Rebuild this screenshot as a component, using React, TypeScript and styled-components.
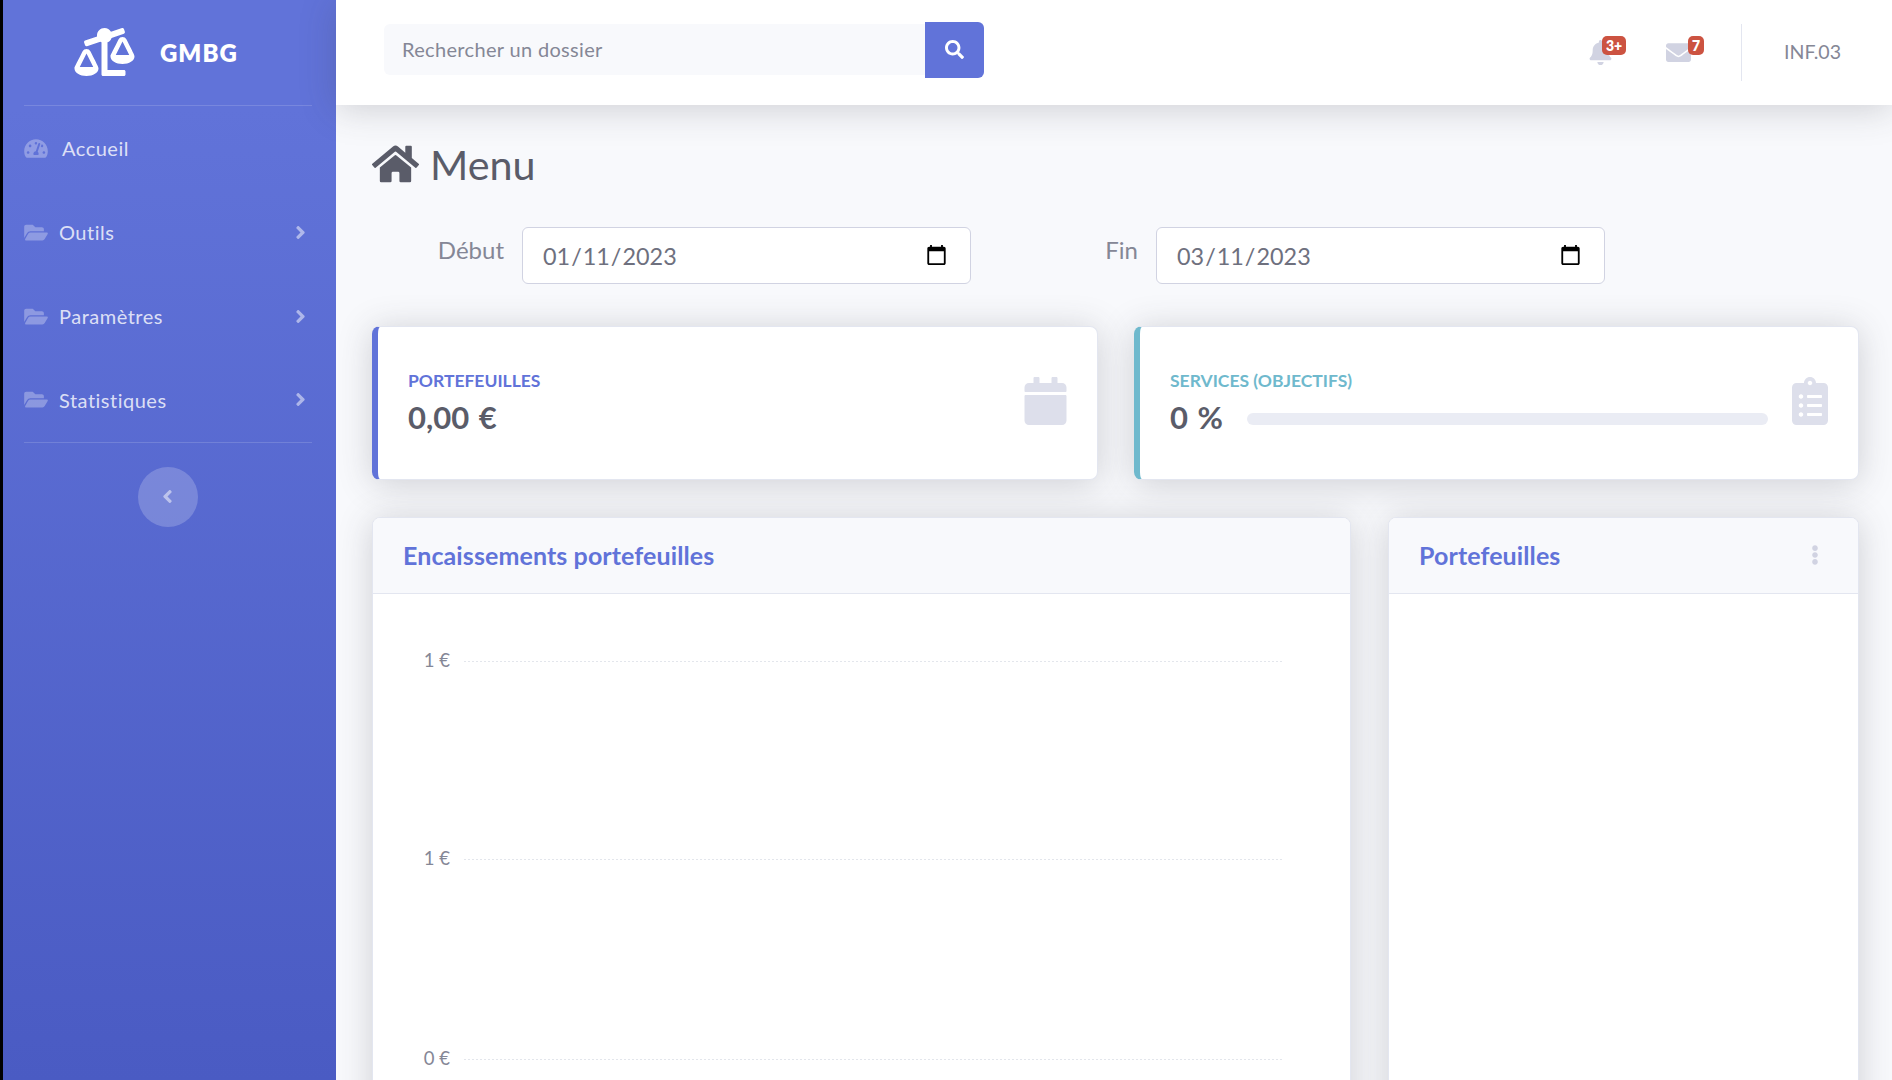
import styled, { createGlobalStyle } from "styled-components";
import {
  FaAngleLeft,
  FaAngleRight,
  FaBalanceScaleLeft,
  FaBell,
  FaCalendar,
  FaClipboardList,
  FaEllipsisV,
  FaEnvelope,
  FaFolderOpen,
  FaHome,
  FaSearch,
  FaTachometerAlt,
} from "react-icons/fa";

const cardShadow = "0 3.6px 34px rgba(58, 59, 69, 0.22)";

const GlobalStyle = createGlobalStyle`
  * { box-sizing: border-box; }
  html, body { margin: 0; padding: 0; height: 100%; overflow: hidden; }
  body {
    background: #f8f9fc;
    color: #858796;
    font-family: Lato, "Noto Sans", sans-serif;
  }
`;

const Wrapper = styled.div`
  display: flex;
  height: 100vh;
  overflow: hidden;
`;

const Sidebar = styled.aside`
  flex: 0 0 336px;
  border-left: 3px solid #000;
  padding: 0 24px 0 21px;
  background: linear-gradient(180deg, #6173d9 10%, #4a5bc3 100%);
  display: flex;
  flex-direction: column;
`;
const Brand = styled.div`
  height: 106px;
  display: flex;
  align-items: center;
  padding: 0 0 1px 50px;
  color: #fff;
  border-bottom: 1px solid rgba(255, 255, 255, 0.15);
  svg {
    width: 61px;
    height: 48px;
    margin-top: -1px;
  }
`;
const BrandText = styled.span`
  margin-left: 25px;
  font-size: 24px;
  font-weight: 800;
  letter-spacing: 1px;
`;
const NavList = styled.nav`
  padding: 1px 0 0;
  border-bottom: 1px solid rgba(255, 255, 255, 0.15);
`;
const NavItem = styled.div`
  height: 84px;
  display: flex;
  align-items: center;
  padding-bottom: 2px;
  color: rgba(255, 255, 255, 0.8);
  font-size: 20px;
  letter-spacing: 0.5px;
  &:last-child {
    height: 83px;
  }
`;
const NavIcon = styled.span<{ $gap: number }>`
  display: flex;
  margin-right: ${props => props.$gap}px;
  color: rgba(255, 255, 255, 0.3);
  svg {
    width: 24px;
    height: 21px;
  }
`;
const NavArrow = styled.span`
  display: flex;
  margin: 0 5px 0 auto;
  color: rgba(255, 255, 255, 0.5);
  svg {
    width: 13px;
    height: 21px;
  }
`;
const CollapseButton = styled.button`
  align-self: center;
  width: 60px;
  height: 60px;
  margin-top: 24px;
  padding: 0 2px 2px 0;
  border: 0;
  border-radius: 50%;
  background: rgba(255, 255, 255, 0.2);
  color: rgba(255, 255, 255, 0.5);
  display: flex;
  align-items: center;
  justify-content: center;
  svg {
    width: 13px;
    height: 21px;
  }
`;

const Page = styled.div`
  flex: 1;
  min-width: 0;
  display: flex;
  flex-direction: column;
`;
const Topbar = styled.header`
  position: relative;
  z-index: 2;
  flex: 0 0 105px;
  display: flex;
  align-items: center;
  padding: 0 51px 0 48px;
  background: #fff;
  box-shadow: ${cardShadow};
`;
const SearchBox = styled.div`
  display: flex;
  align-items: center;
  padding-bottom: 6px;
`;
const SearchInput = styled.input`
  width: 541px;
  height: 51px;
  padding: 0 18px 2px;
  border: 0;
  border-radius: 6px 0 0 6px;
  background: #f8f9fc;
  font: 400 20px Lato, "Noto Sans", sans-serif;
  letter-spacing: 0.33px;
  color: #6e707e;
  outline: none;
  &::placeholder {
    color: #858796;
    opacity: 1;
  }
`;
const SearchButton = styled.button`
  width: 59px;
  height: 56px;
  padding: 0;
  border: 0;
  border-radius: 0 6px 6px 0;
  background: #6173d9;
  color: #fff;
  display: flex;
  align-items: center;
  justify-content: center;
  svg {
    width: 19px;
    height: 19px;
  }
`;
const TopRight = styled.div`
  margin-left: auto;
  display: flex;
  align-items: center;
`;
const AlertIcon = styled.div<{ $gap: number }>`
  position: relative;
  display: flex;
  margin-right: ${props => props.$gap}px;
  color: #d1d3e2;
`;
const Badge = styled.span<{ $left: number }>`
  position: absolute;
  top: -4px;
  left: ${props => props.$left}px;
  padding: 0 4px;
  height: 19px;
  line-height: 19px;
  border-radius: 5px;
  background: #cc5341;
  color: #fff;
  font-size: 14px;
  font-weight: 800;
`;
const TopDivider = styled.div`
  width: 1px;
  height: 57px;
  margin-right: 42px;
  background: #e3e6f0;
`;
const UserName = styled.span`
  width: 57px;
  padding-bottom: 2px;
  font-size: 19.6px;
  white-space: nowrap;
`;

const Main = styled.main`
  flex: 1;
  min-height: 0;
  padding: 35px 33px 0 36px;
`;
const Heading = styled.h1`
  margin: 0;
  height: 48px;
  display: flex;
  align-items: center;
  gap: 11px;
  font-size: 41.3px;
  font-weight: 400;
  line-height: 48px;
  color: #5a5c69;
  svg {
    width: 47px;
    height: 42px;
  }
`;
const DateRow = styled.div`
  margin-top: 39px;
  display: flex;
  gap: 35px;
`;
const DateField = styled.label`
  display: flex;
  align-items: center;
  gap: 18px;
`;
const DateLabel = styled.span`
  width: 132px;
  padding-bottom: 12px;
  text-align: right;
  font-size: 24px;
`;
const DateInput = styled.input`
  width: 449px;
  height: 57px;
  padding: 0 20px 0 19px;
  border: 1px solid #d1d3e2;
  border-radius: 6px;
  background: #fff;
  color: #6e707e;
  font: 400 23.4px Lato, "Noto Sans", sans-serif;
`;

const StatGrid = styled.div`
  margin-top: 42px;
  display: grid;
  grid-template-columns: 726px 725px;
  gap: 36px;
`;
const StatCard = styled.div<{ $accent: string }>`
  height: 154px;
  display: flex;
  align-items: center;
  padding: 0 30px;
  background: #fff;
  border: 1px solid #e3e6f0;
  border-left: 6px solid ${props => props.$accent};
  border-radius: 8px;
  box-shadow: ${cardShadow};
`;
const StatBody = styled.div`
  flex: 1;
  min-width: 0;
`;
const StatLabel = styled.div<{ $color: string }>`
  font-size: 17.5px;
  font-weight: 700;
  line-height: 20px;
  color: ${props => props.$color};
`;
const StatValueRow = styled.div`
  margin-top: 8px;
  display: flex;
  align-items: center;
  gap: 24px;
`;
const StatValue = styled.div`
  font-size: 31px;
  font-weight: 700;
  line-height: 36px;
  word-spacing: 2px;
  color: #5a5c69;
  white-space: nowrap;
`;
const ProgressTrack = styled.div`
  flex: 1;
  height: 12px;
  margin-top: 4px;
  border-radius: 6px;
  background: #eaecf4;
`;
const StatIcon = styled.div<{ $gap: number; $width: number }>`
  display: flex;
  margin: 0 0 4px ${props => props.$gap}px;
  color: #dddfeb;
  svg {
    width: ${props => props.$width}px;
    height: 48px;
  }
`;

const ChartGrid = styled.div`
  margin-top: 37px;
  display: grid;
  grid-template-columns: 979px 471px;
  gap: 37px;
`;
const ChartCard = styled.section`
  height: 640px;
  background: #fff;
  border: 1px solid #e3e6f0;
  border-radius: 8px;
  box-shadow: ${cardShadow};
  overflow: hidden;
`;
const ChartHeader = styled.div`
  height: 76px;
  display: flex;
  align-items: center;
  justify-content: space-between;
  padding: 0 33px 2px 30px;
  background: #f8f9fc;
  border-bottom: 1px solid #e3e6f0;
  color: #d1d3e2;
`;
const ChartTitle = styled.h2`
  margin: 0;
  font-size: 25px;
  font-weight: 700;
  letter-spacing: 0.1px;
  color: #6173d9;
`;
const AxisLabel = styled.text`
  font-size: 18.5px;
  fill: #858796;
  text-anchor: end;
`;

const yTicks = [
  { label: "1 €", y: 67.5 },
  { label: "1 €", y: 265.5 },
  { label: "0 €", y: 465.5 },
];

function App() {
  return (
    <Wrapper>
      <GlobalStyle />
      <Sidebar>
        <Brand>
          <FaBalanceScaleLeft />
          <BrandText>GMBG</BrandText>
        </Brand>
        <NavList>
          <NavItem>
            <NavIcon $gap={14}>
              <FaTachometerAlt />
            </NavIcon>
            Accueil
          </NavItem>
          {["Outils", "Paramètres", "Statistiques"].map(name => (
            <NavItem key={name}>
              <NavIcon $gap={11}>
                <FaFolderOpen />
              </NavIcon>
              {name}
              <NavArrow>
                <FaAngleRight />
              </NavArrow>
            </NavItem>
          ))}
        </NavList>
        <CollapseButton>
          <FaAngleLeft />
        </CollapseButton>
      </Sidebar>
      <Page>
        <Topbar>
          <SearchBox>
            <SearchInput placeholder="Rechercher un dossier" />
            <SearchButton>
              <FaSearch />
            </SearchButton>
          </SearchBox>
          <TopRight>
            <AlertIcon $gap={53}>
              <FaBell size={25} />
              <Badge $left={14}>3+</Badge>
            </AlertIcon>
            <AlertIcon $gap={50}>
              <FaEnvelope size={25} />
              <Badge $left={22}>7</Badge>
            </AlertIcon>
            <TopDivider />
            <UserName>INF.03</UserName>
          </TopRight>
        </Topbar>
        <Main>
          <Heading>
            <FaHome />
            Menu
          </Heading>
          <DateRow>
            <DateField>
              <DateLabel>Début</DateLabel>
              <DateInput type="date" defaultValue="2023-01-11" />
            </DateField>
            <DateField>
              <DateLabel>Fin</DateLabel>
              <DateInput type="date" defaultValue="2023-03-11" />
            </DateField>
          </DateRow>
          <StatGrid>
            <StatCard $accent="#6173d9">
              <StatBody>
                <StatLabel $color="#6173d9">PORTEFEUILLES</StatLabel>
                <StatValueRow>
                  <StatValue>0,00 €</StatValue>
                </StatValueRow>
              </StatBody>
              <StatIcon $gap={0} $width={43}>
                <FaCalendar />
              </StatIcon>
            </StatCard>
            <StatCard $accent="#6fb9cd">
              <StatBody>
                <StatLabel $color="#6fb9cd">SERVICES (OBJECTIFS)</StatLabel>
                <StatValueRow>
                  <StatValue>0 %</StatValue>
                  <ProgressTrack />
                </StatValueRow>
              </StatBody>
              <StatIcon $gap={24} $width={36}>
                <FaClipboardList />
              </StatIcon>
            </StatCard>
          </StatGrid>
          <ChartGrid>
            <ChartCard>
              <ChartHeader>
                <ChartTitle>Encaissements portefeuilles</ChartTitle>
              </ChartHeader>
              <svg width="977" height="560">
                {yTicks.map(tick => (
                  <g key={tick.y}>
                    <AxisLabel x="77" y={tick.y + 5}>
                      {tick.label}
                    </AxisLabel>
                    <line
                      x1="91"
                      x2="909"
                      y1={tick.y}
                      y2={tick.y}
                      stroke="#e3e6ec"
                      strokeDasharray="2 2"
                    />
                  </g>
                ))}
              </svg>
            </ChartCard>
            <ChartCard>
              <ChartHeader>
                <ChartTitle>Portefeuilles</ChartTitle>
                <FaEllipsisV size={20} />
              </ChartHeader>
            </ChartCard>
          </ChartGrid>
        </Main>
      </Page>
    </Wrapper>
  );
}

export default App;
